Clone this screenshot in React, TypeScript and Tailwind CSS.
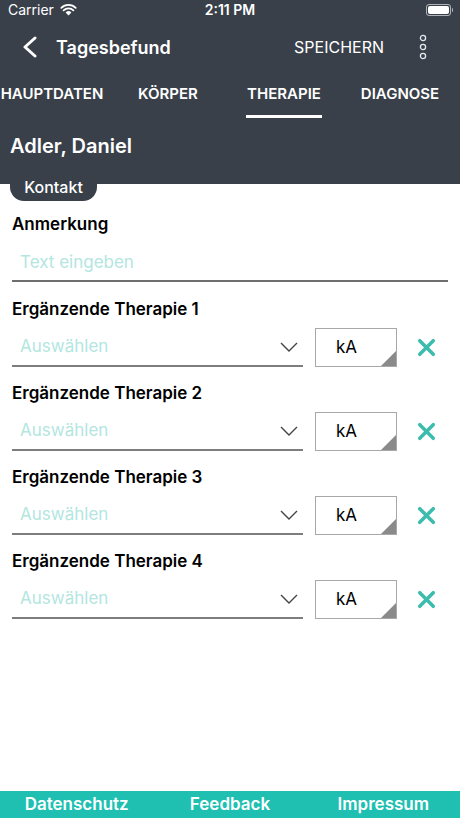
import { X } from "lucide-react"

const font = { fontFamily: "Inter, 'Liberation Sans', sans-serif" }

const tabs = ["HAUPTDATEN", "KÖRPER", "THERAPIE", "DIAGNOSE"]

function StatusBar() {
  return (
    <div className="relative flex h-[20px] items-center px-[8px] text-[14px] text-white">
      <span className="leading-none">Carrier</span>
      <svg width="17" height="12" viewBox="0 0 17 12" className="ml-[6px]">
        <path d="M8.5 11.5 L5.6 8.4 A4.2 4.2 0 0 1 11.4 8.4 Z" fill="white" />
        <path d="M3.6 6.3 A7 7 0 0 1 13.4 6.3" stroke="white" strokeWidth="1.8" fill="none" strokeLinecap="round" />
        <path d="M1.3 3.9 A10.3 10.3 0 0 1 15.7 3.9" stroke="white" strokeWidth="1.8" fill="none" strokeLinecap="round" />
      </svg>
      <span className="absolute left-1/2 -translate-x-1/2 font-semibold leading-none">2:11 PM</span>
      <div className="ml-auto -mr-[1px] flex items-center">
        <div className="flex h-[12px] w-[25px] items-center rounded-[3px] border border-white/60 p-[1px]">
          <div className="h-full w-full rounded-[2px] bg-white" />
        </div>
        <div className="ml-[1px] h-[4px] w-[1.5px] rounded-r bg-white/60" />
      </div>
    </div>
  )
}

function NavBar() {
  return (
    <div className="flex h-[54px] items-center text-white">
      <svg width="18" height="22" viewBox="0 0 18 22" className="ml-[21px]">
        <path d="M14 2 L4 11 L14 20" stroke="white" strokeWidth="3" fill="none" strokeLinecap="round" strokeLinejoin="round" />
      </svg>
      <span className="ml-[17px] text-[18px] font-semibold">Tagesbefund</span>
      <span className="ml-auto text-[16px]">SPEICHERN</span>
      <svg width="10" height="26" viewBox="0 0 10 26" className="ml-[34px] mr-[32px]">
        <circle cx="5" cy="4" r="2.6" stroke="#e5e7eb" strokeWidth="1.3" fill="none" />
        <circle cx="5" cy="13" r="2.6" stroke="#e5e7eb" strokeWidth="1.3" fill="none" />
        <circle cx="5" cy="22" r="2.6" stroke="#e5e7eb" strokeWidth="1.3" fill="none" />
      </svg>
    </div>
  )
}

function TabBar() {
  return (
    <div className="-ml-[6px] flex h-[44px] overflow-hidden">
      {tabs.map((t) => (
        <div key={t} className="flex w-[116px] shrink-0 flex-col items-center">
          <div className="flex h-[40px] items-center text-[15px] font-semibold text-white">{t}</div>
          {t === "THERAPIE" && <div className="mt-[1px] h-[3px] w-[76px] bg-white" />}
        </div>
      ))}
    </div>
  )
}

function TherapyRow({ n }: { n: number }) {
  return (
    <div className="mb-[15px]">
      <div className="h-[22px] text-[17px] font-semibold leading-[22px] text-black">
        Ergänzende Therapie {n}
      </div>
      <div className="mt-[8px] flex h-[39px] items-stretch">
        <div className="flex w-[291px] items-center border-b-2 border-[#7d7d7d] pl-[8px] pr-[5px]">
          <span className="text-[17px] text-[#b3e6df]">Auswählen</span>
          <svg width="18" height="10" viewBox="0 0 18 10" className="ml-auto">
            <path d="M1 1 L9 9 L17 1" stroke="#444" strokeWidth="1.4" fill="none" />
          </svg>
        </div>
        <div className="relative ml-[12px] flex w-[82px] items-center border border-[#a8a8a8] pl-[20px] text-[17px] text-black">
          kA
          <div className="absolute bottom-0 right-0 h-0 w-0 border-b-[15px] border-l-[15px] border-b-[#8a8a8a] border-l-transparent" />
        </div>
        <div className="flex flex-1 items-center justify-center">
          <X size={27} strokeWidth={3.2} className="ml-[8px] text-[#3dbcad]" />
        </div>
      </div>
    </div>
  )
}

export default function App() {
  return (
    <div className="flex min-h-screen flex-col bg-white" style={font}>
      <header className="bg-[#39404a]">
        <StatusBar />
        <NavBar />
        <TabBar />
        <div className="mt-[14px] h-[28px] pl-[10px] text-[20px] font-semibold leading-[28px] text-white">
          Adler, Daniel
        </div>
        <div className="relative z-10 ml-[10px] mt-[12px] -mb-[17px] flex h-[29px] w-[87px] items-center justify-center rounded-b-[14px] bg-[#39404a] pt-[1px] text-[16px] font-medium text-white">
          Kontakt
        </div>
      </header>

      <main className="px-[12px] pt-[29px]">
        <div className="h-[22px] text-[17px] font-semibold leading-[22px] text-black">Anmerkung</div>
        <div className="mt-[15px] w-[436px] border-b-2 border-[#6e6e6e] pb-[6px] pl-[8px] text-[17px] leading-[24px] text-[#b3e6df]">
          Text eingeben
        </div>
        <div className="mt-[16px]">
          {[1, 2, 3, 4].map((n) => (
            <TherapyRow key={n} n={n} />
          ))}
        </div>
      </main>

      <footer className="mt-auto flex h-[27px] items-center bg-[#1fbfb2] text-[17px] font-semibold text-white">
        <div className="flex-1 text-center">Datenschutz</div>
        <div className="flex-1 text-center">Feedback</div>
        <div className="flex-1 text-center">Impressum</div>
      </footer>
    </div>
  )
}
